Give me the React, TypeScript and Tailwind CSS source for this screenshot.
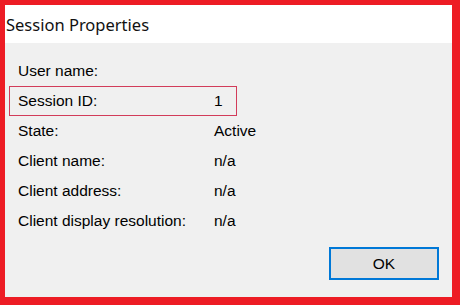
const rows: { label: string; value: string; highlight?: boolean }[] = [
  { label: 'User name:', value: '' },
  { label: 'Session ID:', value: '1', highlight: true },
  { label: 'State:', value: 'Active' },
  { label: 'Client name:', value: 'n/a' },
  { label: 'Client address:', value: 'n/a' },
  { label: 'Client display resolution:', value: 'n/a' },
];

export default function App() {
  return (
    <div className="flex h-[305px] w-[460px] flex-col bg-[#ed1c24] pb-[8px] pl-[5px] pr-[8px] pt-[5px]">
      <div className="flex h-[38px] items-center bg-white pl-[1px] pt-[2px] font-['Noto_Sans',sans-serif] text-[16.5px] text-[#111]">
        Session Properties
      </div>
      <div className="flex flex-1 flex-col bg-[#f0f0f0] pl-[4px] pt-[13px] font-['Liberation_Sans',Arial,sans-serif] text-[15.5px] text-black">
        {rows.map((r) => (
          <div
            key={r.label}
            className={
              r.highlight
                ? 'flex h-[30px] w-[228px] items-center border border-[#d23c5a] pl-[8px]'
                : 'flex h-[30px] w-[228px] items-center border border-transparent pl-[8px]'
            }
          >
            <span className="w-[196px] shrink-0 whitespace-nowrap">{r.label}</span>
            <span className="shrink-0 whitespace-nowrap">{r.value}</span>
          </div>
        ))}
        <button className="mb-[17px] mr-[13px] mt-auto flex h-[33px] w-[110px] items-center justify-center self-end border-2 border-[#0078d7] bg-[#e1e1e1] text-[15.5px]">
          OK
        </button>
      </div>
    </div>
  );
}
